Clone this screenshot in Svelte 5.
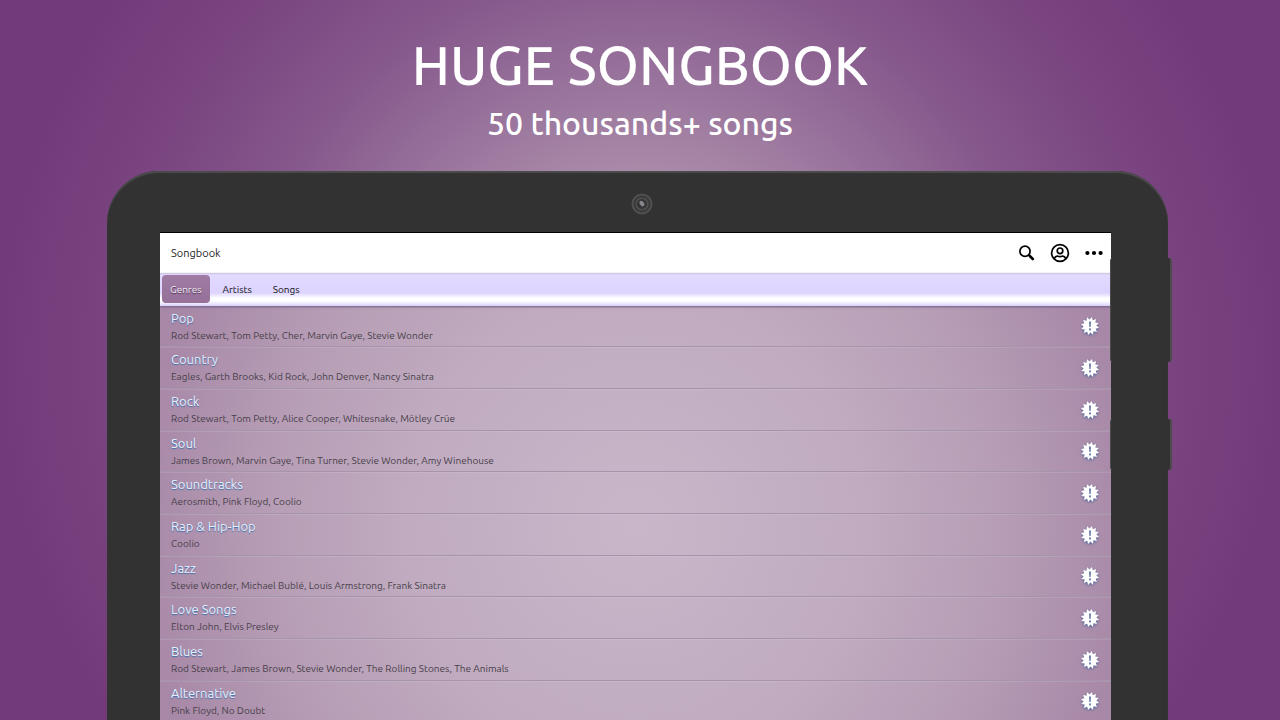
<script>
    let activeTab = 'Genres';
    const tabs = ['Genres', 'Artists', 'Songs'];

    const genres = [
        { name: 'Pop', artists: 'Rod Stewart, Tom Petty, Cher, Marvin Gaye, Stevie Wonder' },
        { name: 'Country', artists: 'Eagles, Garth Brooks, Kid Rock, John Denver, Nancy Sinatra' },
        { name: 'Rock', artists: 'Rod Stewart, Tom Petty, Alice Cooper, Whitesnake, Mötley Crüe' },
        { name: 'Soul', artists: 'James Brown, Marvin Gaye, Tina Turner, Stevie Wonder, Amy Winehouse' },
        { name: 'Soundtracks', artists: 'Aerosmith, Pink Floyd, Coolio' },
        { name: 'Rap & Hip-Hop', artists: 'Coolio' },
        { name: 'Jazz', artists: 'Stevie Wonder, Michael Bublé, Louis Armstrong, Frank Sinatra' },
        { name: 'Love Songs', artists: 'Elton John, Elvis Presley' },
        { name: 'Blues', artists: 'Rod Stewart, James Brown, Stevie Wonder, The Rolling Stones, The Animals' },
        { name: 'Alternative', artists: 'Pink Floyd, No Doubt' },
    ];

    // twelve-pointed badge outline
    const burst = Array.from({ length: 24 }, (_, i) => {
        const r = i % 2 ? 6.4 : 9.2;
        const a = (i * Math.PI) / 12 + 0.2;
        return `${(10 + r * Math.sin(a)).toFixed(2)},${(10 - r * Math.cos(a)).toFixed(2)}`;
    }).join(' ');
</script>

<main class="promo">
    <header class="headline">
        <h1>HUGE SONGBOOK</h1>
        <p>50 thousands+ songs</p>
    </header>

    <section class="tablet">
        <div class="bezel">
            <svg class="camera" viewBox="0 0 22 22" aria-hidden="true">
                <circle cx="11" cy="11" r="9.5" fill="#3a3a3a" stroke="#505050" stroke-width="2" />
                <circle cx="11" cy="11" r="5.8" fill="#343434" stroke="#505050" stroke-width="1.6" />
                <ellipse cx="11.2" cy="10.6" rx="2.1" ry="3" fill="#85858b" transform="rotate(-35 11 11)" />
            </svg>
        </div>

        <div class="screen">
            <div class="topbar">
                <h2>Songbook</h2>
                <div class="actions">
                    <button aria-label="Search">
                        <svg viewBox="0 0 20 20">
                            <circle cx="9" cy="8.2" r="5.1" fill="none" stroke="#000" stroke-width="1.7" />
                            <path d="M12.6 12l1.3 1.2" stroke="#000" stroke-width="1.6" />
                            <path d="M13.8 13l3 3" stroke="#000" stroke-width="2.6" stroke-linecap="round" />
                        </svg>
                    </button>
                    <button aria-label="Account">
                        <svg viewBox="0 0 20 20" fill="none" stroke="#000" stroke-width="1.7">
                            <circle cx="10" cy="10" r="8.4" />
                            <circle cx="10" cy="7.8" r="2.8" />
                            <path d="M4.2 15.6c.9-1.9 2.2-2.6 3.6-2.4 1.5.5 2.9.5 4.4 0 1.4-.2 2.7.5 3.6 2.4" />
                        </svg>
                    </button>
                    <button aria-label="More">
                        <svg viewBox="0 0 20 20">
                            <circle cx="3.4" cy="10" r="2.1" />
                            <circle cx="10" cy="10" r="2.1" />
                            <circle cx="16.6" cy="10" r="2.1" />
                        </svg>
                    </button>
                </div>
            </div>

            <nav class="tabs">
                {#each tabs as tab}
                    <button class:active={activeTab === tab} on:click={() => (activeTab = tab)}>{tab}</button>
                {/each}
            </nav>

            <ul class="genres">
                {#each genres as genre}
                    <li>
                        <div class="info">
                            <span class="name">{genre.name}</span>
                            <span class="artists">{genre.artists}</span>
                        </div>
                        <svg class="badge" viewBox="0 0 20 20" aria-hidden="true">
                            <polygon points={burst} fill="#fff" />
                            <path d="M8.9 5.4h2.2l-.4 5.6H9.3z" fill="#7484ac" />
                            <rect x="9" y="12.4" width="2" height="2" fill="#7484ac" />
                        </svg>
                    </li>
                {/each}
            </ul>
        </div>

        <span class="side-key volume"></span>
        <span class="side-key power"></span>
    </section>
</main>

<style>
    :global(body) {
        margin: 0;
    }

    .promo {
        display: flex;
        flex-direction: column;
        height: 100vh;
        overflow: hidden;
        font-family: Ubuntu, "Noto Sans", sans-serif;
        background: radial-gradient(circle at 50% 50%, #c9b6c9 0, #a787a7 200px, #956f99 300px, #85578b 400px, #7a4580 520px, #733a7a 640px);
    }

    .headline {
        flex: none;
        box-sizing: border-box;
        height: 171px;
        padding-top: 33px;
        text-align: center;
        color: #fff;
        font-weight: 500;
    }
    h1 {
        margin: 0;
        font-size: 54px;
        line-height: 64px;
        font-weight: 500;
    }
    .headline p {
        margin: 4px 0 0;
        font-size: 32px;
        line-height: 44px;
    }

    .tablet {
        position: relative;
        flex: 1;
        min-height: 0;
        display: flex;
        flex-direction: column;
        margin: 0 112px 0 107px;
        padding: 0 57px 0 53px;
        background: #323232;
        border-radius: 52px 52px 0 0;
        box-shadow: inset 0 2px 1px #4c4c4c;
    }
    .bezel {
        flex: none;
        display: flex;
        justify-content: center;
        align-items: center;
        height: 62px;
        padding: 5px 0 0 12px;
        box-sizing: border-box;
        border-bottom: 1px solid #000;
    }
    .camera {
        width: 22px;
        height: 22px;
    }

    .screen {
        flex: 1;
        min-height: 0;
        overflow: hidden;
        background: radial-gradient(circle at 50% 60%, #c9b7c9 0, #c0abc0 230px, #b69db5 370px, #a788a7 500px);
    }

    .topbar {
        display: flex;
        justify-content: space-between;
        align-items: center;
        height: 40px;
        padding: 0 7px 0 11px;
        background: #fff;
    }
    h2 {
        margin: 0;
        font-size: 11px;
        font-weight: 400;
        color: #222;
    }
    .actions {
        display: flex;
        gap: 14px;
    }
    .actions button {
        width: 20px;
        height: 20px;
        padding: 0;
        border: 0;
        background: none;
        cursor: pointer;
    }
    .actions svg {
        display: block;
        width: 20px;
        height: 20px;
    }

    .tabs {
        position: relative;
        display: flex;
        gap: 5px;
        height: 33px;
        padding: 2px;
        box-sizing: border-box;
        background: linear-gradient(#c9c4dc 0, #e2daff 2px, #dcd4fe 20px, #fff 25px, #fff 28px, #d8d0fa 33px);
        box-shadow: 0 1px 2px #6d5b80;
    }
    .tabs button {
        height: 28px;
        padding: 0 8px;
        border: 0;
        border-radius: 4px;
        background: none;
        font-family: inherit;
        font-size: 10px;
        color: #111;
        cursor: pointer;
    }
    .tabs .active {
        background: linear-gradient(#a07ca5, #957099);
        color: #f3ecf5;
        text-shadow: 0 1px 1px #4a3350;
    }

    .genres {
        list-style: none;
        margin: 0;
        padding: 0;
    }
    .genres li {
        display: flex;
        justify-content: space-between;
        align-items: center;
        height: 42px;
        padding: 0 11px;
        box-sizing: border-box;
        border-bottom: 1px solid #a594aa;
        box-shadow: inset 0 1px 0 rgba(255, 255, 255, 0.1);
    }
    .genres li:nth-child(3n + 1) {
        height: 41px;
    }
    .info {
        display: flex;
        flex-direction: column;
        padding-top: 2px;
    }
    .name {
        font-size: 13px;
        line-height: 17px;
        color: #e6effc;
        text-shadow: 0 1px 1px #3d6ca8;
    }
    .artists {
        font-size: 10px;
        line-height: 18px;
        color: #484049;
    }
    .badge {
        width: 20px;
        height: 20px;
        filter: drop-shadow(0 1px 1px #4a6599);
    }

    .side-key {
        position: absolute;
        right: -4px;
        width: 62px;
        box-sizing: border-box;
        background: #323232;
        border: solid #4c4c4c;
        border-width: 0 2px 0 1px;
        border-radius: 3px;
    }
    .volume {
        top: 87px;
        height: 104px;
    }
    .power {
        top: 248px;
        height: 51px;
    }
</style>
